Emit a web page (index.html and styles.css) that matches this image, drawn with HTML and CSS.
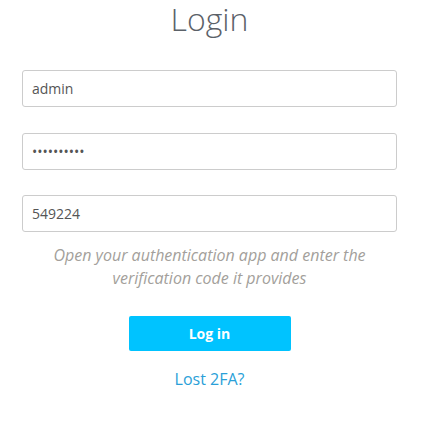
FILE: index.html
```html
<!DOCTYPE html>
<html>
<head>
<meta charset="utf-8">
<link rel="stylesheet" href="styles.css">
</head>
<body>
<div class="login">
  <h1 class="title">Login</h1>
  <form class="form">
    <input class="field" type="text" value="admin">
    <input class="field field-pass" type="password" value="adminadmin">
    <input class="field field-last" type="text" value="549224">
    <p class="hint">Open your authentication app and enter the verification code it provides</p>
    <button class="btn" type="button">Log in</button>
    <a class="lost" href="#">Lost 2FA?</a>
  </form>
</div>
</body>
</html>
```
FILE: styles.css
```css
html, body {
  margin: 0;
  padding: 0;
  background: #ffffff;
}
body {
  font-family: "Open Sans", "Liberation Sans", sans-serif;
}
.login {
  width: 375px;
  margin-left: 22px;
  display: flex;
  flex-direction: column;
}
.title {
  margin: 1px 0 0;
  font-size: 32px;
  line-height: 35px;
  font-weight: 300;
  color: #5b6168;
  text-align: center;
}
.form {
  margin-top: 34px;
  display: flex;
  flex-direction: column;
  align-items: center;
}
.field {
  box-sizing: border-box;
  width: 375px;
  height: 37px;
  margin: 0 0 26px;
  padding: 0 9px;
  border: 1px solid #cccccc;
  border-radius: 3px;
  font-family: "Open Sans", sans-serif;
  font-size: 14px;
  color: #555555;
  background: #fff;
  outline: none;
}
.field-pass {
  margin-bottom: 25px;
}
.field-last {
  margin-bottom: 12px;
}
.hint {
  margin: 0;
  font-size: 16px;
  line-height: 22.7px;
  font-style: italic;
  color: #a39f9b;
  text-align: center;
}
.btn {
  margin-top: 27px;
  width: 162px;
  height: 35px;
  border: 0;
  border-radius: 2px;
  background: #00c3ff;
  color: #ffffff;
  font-family: "Open Sans", sans-serif;
  font-size: 14px;
  font-weight: 700;
  cursor: pointer;
}
.lost {
  margin-top: 17px;
  font-size: 16px;
  line-height: 22.7px;
  color: #2a9fd8;
  text-decoration: none;
}
```
